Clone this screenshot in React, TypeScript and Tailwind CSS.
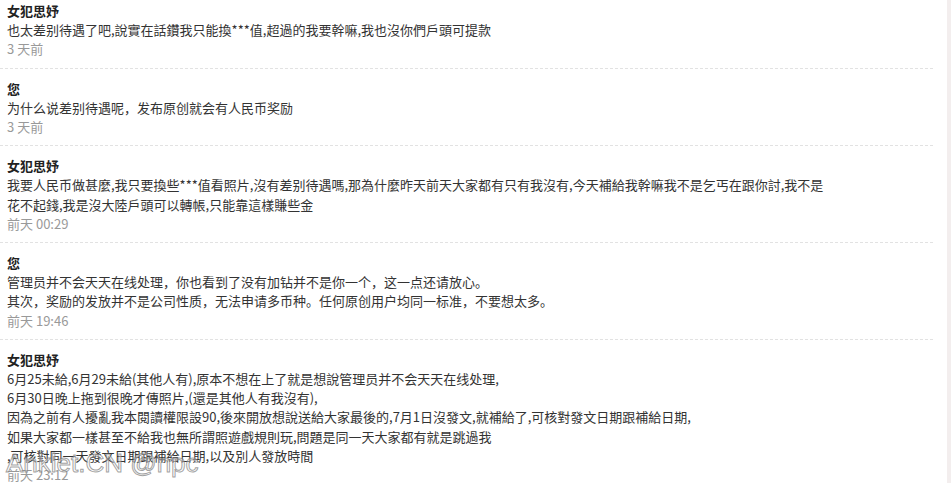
import React from "react";

type Item = { name: string; lines: string[]; time: string };

const items: Item[] = [
  {
    name: "女犯思妤",
    lines: ["也太差别待遇了吧,說實在話鑽我只能換***值,超過的我要幹嘛,我也沒你們戶頭可提款"],
    time: "3 天前",
  },
  {
    name: "您",
    lines: ["为什么说差别待遇呢，发布原创就会有人民币奖励"],
    time: "3 天前",
  },
  {
    name: "女犯思妤",
    lines: [
      "我要人民币做甚麼,我只要換些***值看照片,沒有差别待遇嗎,那為什麼昨天前天大家都有只有我沒有,今天補給我幹嘛我不是乞丐在跟你討,我不是",
      "花不起錢,我是沒大陸戶頭可以轉帳,只能靠這樣賺些金",
    ],
    time: "前天 00:29",
  },
  {
    name: "您",
    lines: [
      "管理员并不会天天在线处理，你也看到了没有加钻并不是你一个，这一点还请放心。",
      "其次，奖励的发放并不是公司性质，无法申请多币种。任何原创用户均同一标准，不要想太多。",
    ],
    time: "前天 19:46",
  },
  {
    name: "女犯思妤",
    lines: [
      "6月25未給,6月29未給(其他人有),原本不想在上了就是想說管理员并不会天天在线处理,",
      "6月30日晚上拖到很晚才傳照片,(還是其他人有我沒有),",
      "因為之前有人擾亂我本閱讀權限設90,後來開放想說送給大家最後的,7月1日沒發文,就補給了,可核對發文日期跟補給日期,",
      "如果大家都一樣甚至不給我也無所謂照遊戲規則玩,問題是同一天大家都有就是跳過我",
      ",可核對同一天發文日期跟補給日期,以及別人發放時間",
    ],
    time: "前天 23:12",
  },
];

export default function App() {
  return (
    <div
      className="relative flex h-[483px] w-[951px] overflow-hidden bg-white"
      style={{ fontFamily: '"Noto Sans CJK SC", "Noto Sans CJK TC", sans-serif' }}
    >
      <div className="w-[947px]">
        <div className="w-[933px]">
          {items.map((it, i) => (
            <div
              key={i}
              className={`border-b border-dashed border-[#e2e2e2] pl-[7px] pb-[9px] ${
                i === 0 ? "pt-[1px]" : "pt-[10px]"
              }`}
            >
              <div className="text-[13px] leading-[19.2px] font-bold text-[#222]">{it.name}</div>
              {it.lines.map((l, j) => (
                <div key={j} className="text-[13px] leading-[19.2px] text-[#333] whitespace-nowrap">
                  {l}
                </div>
              ))}
              <div className="text-[13px] leading-[19.2px] text-[#999]">{it.time}</div>
            </div>
          ))}
        </div>
      </div>
      <div className="w-[4px] bg-[#f3eeee]" />
      <div
        className="absolute left-[6px] top-[448px] text-[26px] leading-[30px] text-white/40 [-webkit-text-stroke:1px_rgba(120,120,120,0.7)]"
        style={{ fontFamily: '"Liberation Sans", Arial, sans-serif' }}
      >
        Anklet.CN @npc
      </div>
    </div>
  );
}
